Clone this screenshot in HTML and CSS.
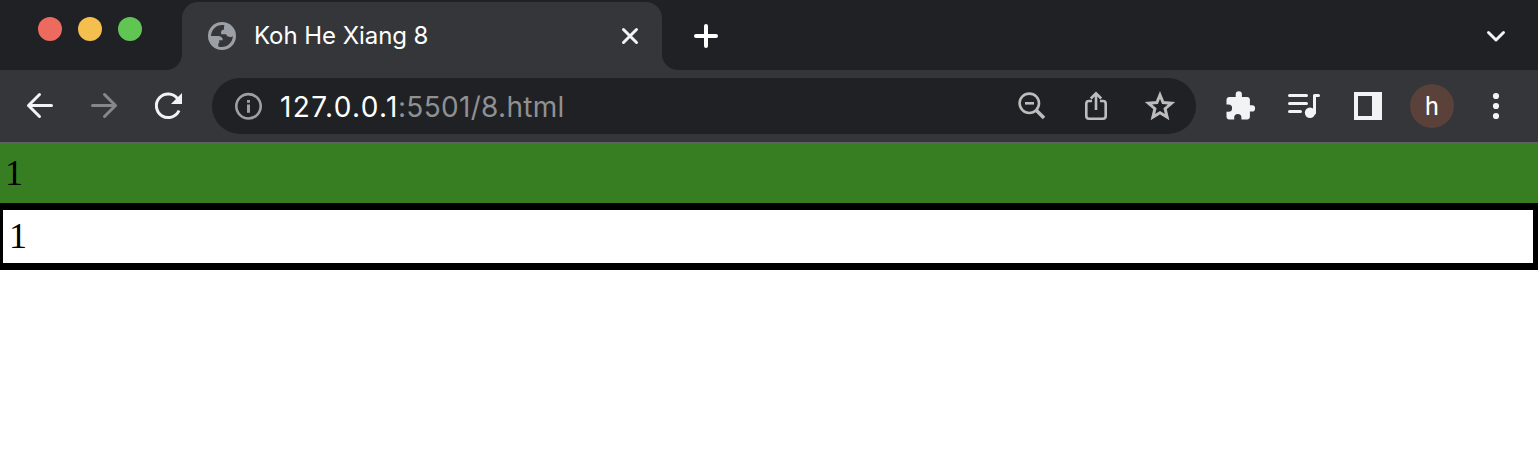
FILE: index.html
```
<!DOCTYPE html>
<html lang="en">
<head>
<meta charset="utf-8">
<title>Koh He Xiang 8</title>
<link rel="stylesheet" href="styles.css">
</head>
<body>
<header class="tabstrip">
  <div class="lights"><i class="light red"></i><i class="light yellow"></i><i class="light green"></i></div>
  <i class="flare flare-left"></i>
  <div class="tab">
    <svg class="globe" width="28" height="28" viewBox="0 0 28 28"><circle cx="14" cy="14" r="14" fill="#9aa0a6"/><path d="M16.500 3.300C9.500 1.800 3.300 7 3 14h7c2.800 0 4.700 1.400 4.900 4.300h-3.700v2.900H10.300v3.200c7.500 2.200 14.300-3 14.600-10.500-1.600 1.300-3.200 1.500-4.700.7-1.100-.5-1.700-1.200-2-2.300h-4.900c-.9-3 .1-4.700 2.800-4.900-.2-1.700-.1-3 .4-4.100z" fill="#35363a"/></svg>
    <span class="title">Koh He Xiang 8</span>
    <svg class="close" width="32" height="32" viewBox="0 0 32 32"><path d="M9.500 9.500l13 13m0-13l-13 13" class="line"/></svg>
  </div>
  <i class="flare flare-right"></i>
  <svg class="plus" width="32" height="32" viewBox="0 0 32 32"><path d="M16 6v20M6 16h20" class="line thick"/></svg>
  <svg class="chevron" width="32" height="32" viewBox="0 0 32 32"><path d="M8.500 12.500l7.500 7.500 7.500-7.500" class="line"/></svg>
</header>
<nav class="toolbar">
  <svg width="32" height="32" viewBox="0 0 32 32"><path d="M27.500 15.500H4.500M15.500 4.500L4.500 15.500l11 11" class="line"/></svg>
  <svg width="32" height="32" viewBox="0 0 32 32"><path d="M4.500 15.500h23M16.500 4.500l11 11-11 11" class="line dim"/></svg>
  <svg width="32" height="32" viewBox="0 0 32 32"><path d="M27 20.500A11.800 11.800 0 1 1 25.500 8.500" class="line reload"/><path d="M30 3v11H19z" fill="#f1f3f4"/></svg>
  <div class="omnibox">
    <svg class="info" width="32" height="32" viewBox="0 0 32 32"><circle cx="16.500" cy="16.300" r="12.200" fill="none" stroke="#9aa0a6" stroke-width="2.600"/><path d="M15 10h3v2.800h-3zM15 14.600h3V22.800h-3z" fill="#9aa0a6"/></svg>
    <span class="url"><span class="host">127.0.0.1</span><span class="path">:5501/8.html</span></span>
    <svg width="32" height="32" viewBox="0 0 32 32"><circle cx="13.300" cy="13.300" r="9.700" class="gray"/><path d="M9 13.300h9" class="gray"/><path d="M20.500 20.500l7.500 7.500" class="gray handle"/></svg>
    <svg width="32" height="32" viewBox="0 0 32 32"><path d="M12 11H9Q6.300 11 6.300 13.700V26Q6.300 28.700 9 28.700H23Q25.700 28.700 25.700 26V13.700Q25.700 11 23 11H20M16 20V4M10.800 8.500L16 3.300l5.200 5.200" class="gray"/></svg>
    <svg width="32" height="32" viewBox="0 0 32 32"><path d="M16 5l3.100 7.600 8.400.7-6.400 5.400 2 8.300L16 22.700 8.900 27l2-8.300-6.400-5.400 8.400-.7z" class="gray star"/></svg>
  </div>
  <svg width="32" height="32" viewBox="0 0 32 32"><path d="M28 15.300h-2.100V9.600c0-1.500-1.200-2.700-2.700-2.700h-5.300V4.300a3.100 3.100 0 0 0-6.200 0v2.600H5.200C3.700 6.900 2.500 8.100 2.500 9.600v5h2a3.600 3.600 0 0 1 0 7.200h-2v5c0 1.500 1.200 2.700 2.700 2.700h5v-2a3.600 3.600 0 0 1 7.200 0v2h5.800c1.500 0 2.700-1.200 2.700-2.700v-5.300H28a3.100 3.100 0 0 0 0-6.200z" fill="#f1f3f4"/></svg>
  <svg width="32" height="32" viewBox="0 0 32 32"><path d="M1.500 5.500h17M1.500 13.500h17M1.500 21.500h11M26.500 23V5.500h4" class="line"/><circle cx="22" cy="22.800" r="5.200" fill="#f1f3f4"/></svg>
  <svg width="32" height="32" viewBox="0 0 32 32"><path fill-rule="evenodd" d="M2 2h28v28H2zM6 6v20h14V6z" fill="#f1f3f4"/></svg>
  <span class="avatar">h</span>
  <svg width="32" height="32" viewBox="0 0 32 32"><g fill="#f1f3f4"><circle cx="16" cy="6" r="3.100"/><circle cx="16" cy="16" r="3.100"/><circle cx="16" cy="26" r="3.100"/></g></svg>
</nav>
<main class="page">
  <div class="row filled">1</div>
  <div class="row outlined">1</div>
</main>
</body>
</html>
```
FILE: styles.css
```
* { box-sizing: border-box; }
body { margin: 0; height: 454px; overflow: hidden; background: #fff; }
svg { display: block; flex: none; }
.line { fill: none; stroke: #f1f3f4; stroke-width: 3; stroke-linecap: round; stroke-linejoin: round; }
.thick { stroke: #fff; stroke-width: 4; }
.dim { stroke: #86878a; }
.reload { stroke-linecap: butt; }
.gray { fill: none; stroke: #bdbdbe; stroke-width: 2.600; }
.handle { stroke-width: 3.600; }
.star { stroke-width: 3; }
.tabstrip { height: 70px; background: #202124; display: flex; align-items: flex-end; }
.lights { width: 166px; height: 70px; padding: 17px 0 0 38px; display: flex; gap: 16px; }
.light { width: 24px; height: 24px; border-radius: 50%; }
.red { background: #ed6a5e; }
.yellow { background: #f5bf4f; }
.green { background: #61c554; }
.flare { width: 16px; height: 16px; }
.flare-left { background: radial-gradient(circle at 0 0, transparent 15.500px, #35363a 16.500px); }
.flare-right { background: radial-gradient(circle at 100% 0, transparent 15.500px, #35363a 16.500px); }
.tab { width: 480px; height: 68px; background: #35363a; border-radius: 16px 16px 0 0; display: flex; align-items: center; padding: 0 16px 0 26px; }
.title { margin-left: 18px; flex: 1; font: 24px/32px Inter, sans-serif; letter-spacing: -0.06px; color: #fff; white-space: nowrap; }
.plus { margin: 0 0 18px 12px; }
.chevron { margin: 0 26px 18px auto; }
.toolbar { height: 74px; padding: 0 26px 0 24px; background: #35363a; border-bottom: 2px solid #5f6063; display: flex; align-items: center; gap: 32px; }
.omnibox { flex: none; width: 984px; height: 56px; margin: 0 -4px 0 -4px; padding: 0 20px; border-radius: 28px; background: #202124; display: flex; align-items: center; gap: 32px; }
.url { flex: 1; display: flex; margin-left: -16px; padding-top: 1px; font: 28px/36px Inter, sans-serif; color: #fff; white-space: nowrap; }
.host { width: 118px; letter-spacing: 1.380px; }
.path { color: #8f9092; letter-spacing: 0.300px; }
.avatar { flex: none; width: 44px; height: 44px; margin: 0 -6px; border-radius: 50%; background: #5a4139; color: #fff; font: 25px/45px Roboto, sans-serif; text-align: center; }
.row { font: 36px/53px "Liberation Serif", serif; color: #000; }
.filled { height: 59px; padding: 3px 0 0 5px; background: #377e22; }
.outlined { height: 67px; padding-left: 6px; border: solid #000; border-width: 7px 5px 7px 3px; }
```
